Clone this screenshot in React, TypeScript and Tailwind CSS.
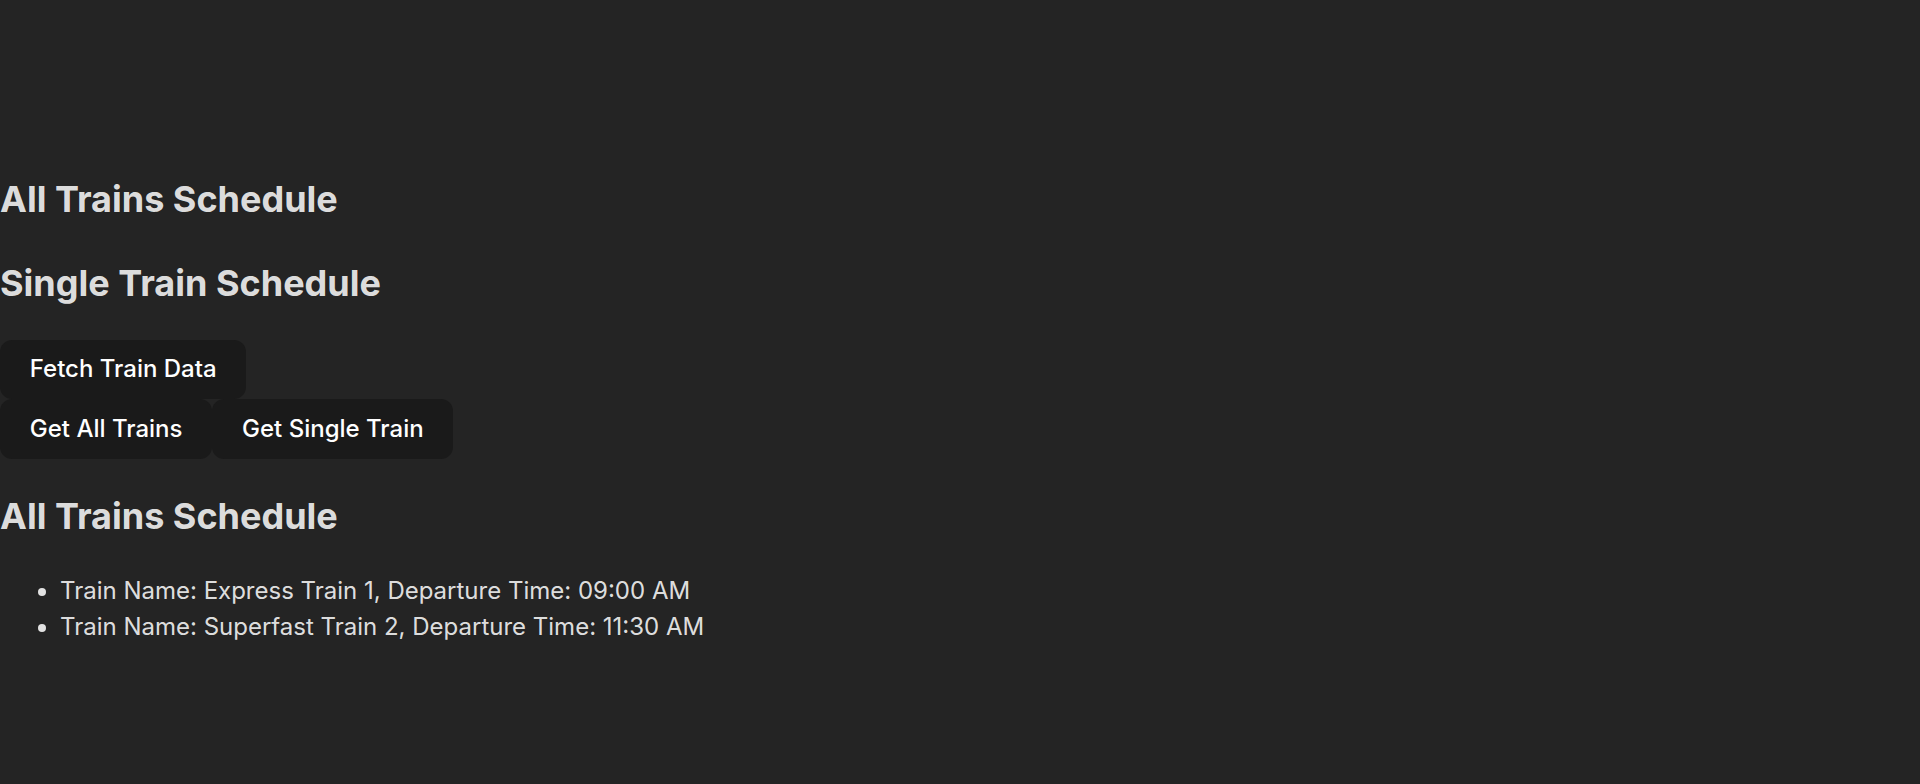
import React from "react";

const btn =
  "bg-[#1a1a1a] text-white border border-transparent rounded-[12px] px-[28.8px] py-[14.4px] text-[24px] leading-[28.5px] font-medium cursor-pointer";

export default function App() {
  return (
    <div
      className="min-h-[784px] w-full bg-[#242424] pt-[142px] text-[rgba(255,255,255,0.87)]"
      style={{ fontFamily: "Inter, 'Noto Sans', sans-serif" }}
    >
      <div className="w-full">
        <h2 className="text-[36px] leading-[54px] font-bold mt-[30px] mb-[30px]">All Trains Schedule</h2>
        <h2 className="text-[36px] leading-[54px] font-bold mb-[30px]">Single Train Schedule</h2>
        <div className="flex">
          <button className={btn}>Fetch Train Data</button>
        </div>
        <div className="flex">
          <button className={btn}>Get All Trains</button>
          <button className={btn}>Get Single Train</button>
        </div>
        <h2 className="text-[36px] leading-[54px] font-bold mt-[30px] mb-[30px]">All Trains Schedule</h2>
        <ul className="list-disc pl-[60px] text-[24px] leading-[36px]">
          <li>Train Name: Express Train 1, Departure Time: 09:00 AM</li>
          <li>Train Name: Superfast Train 2, Departure Time: 11:30 AM</li>
        </ul>
      </div>
    </div>
  );
}
